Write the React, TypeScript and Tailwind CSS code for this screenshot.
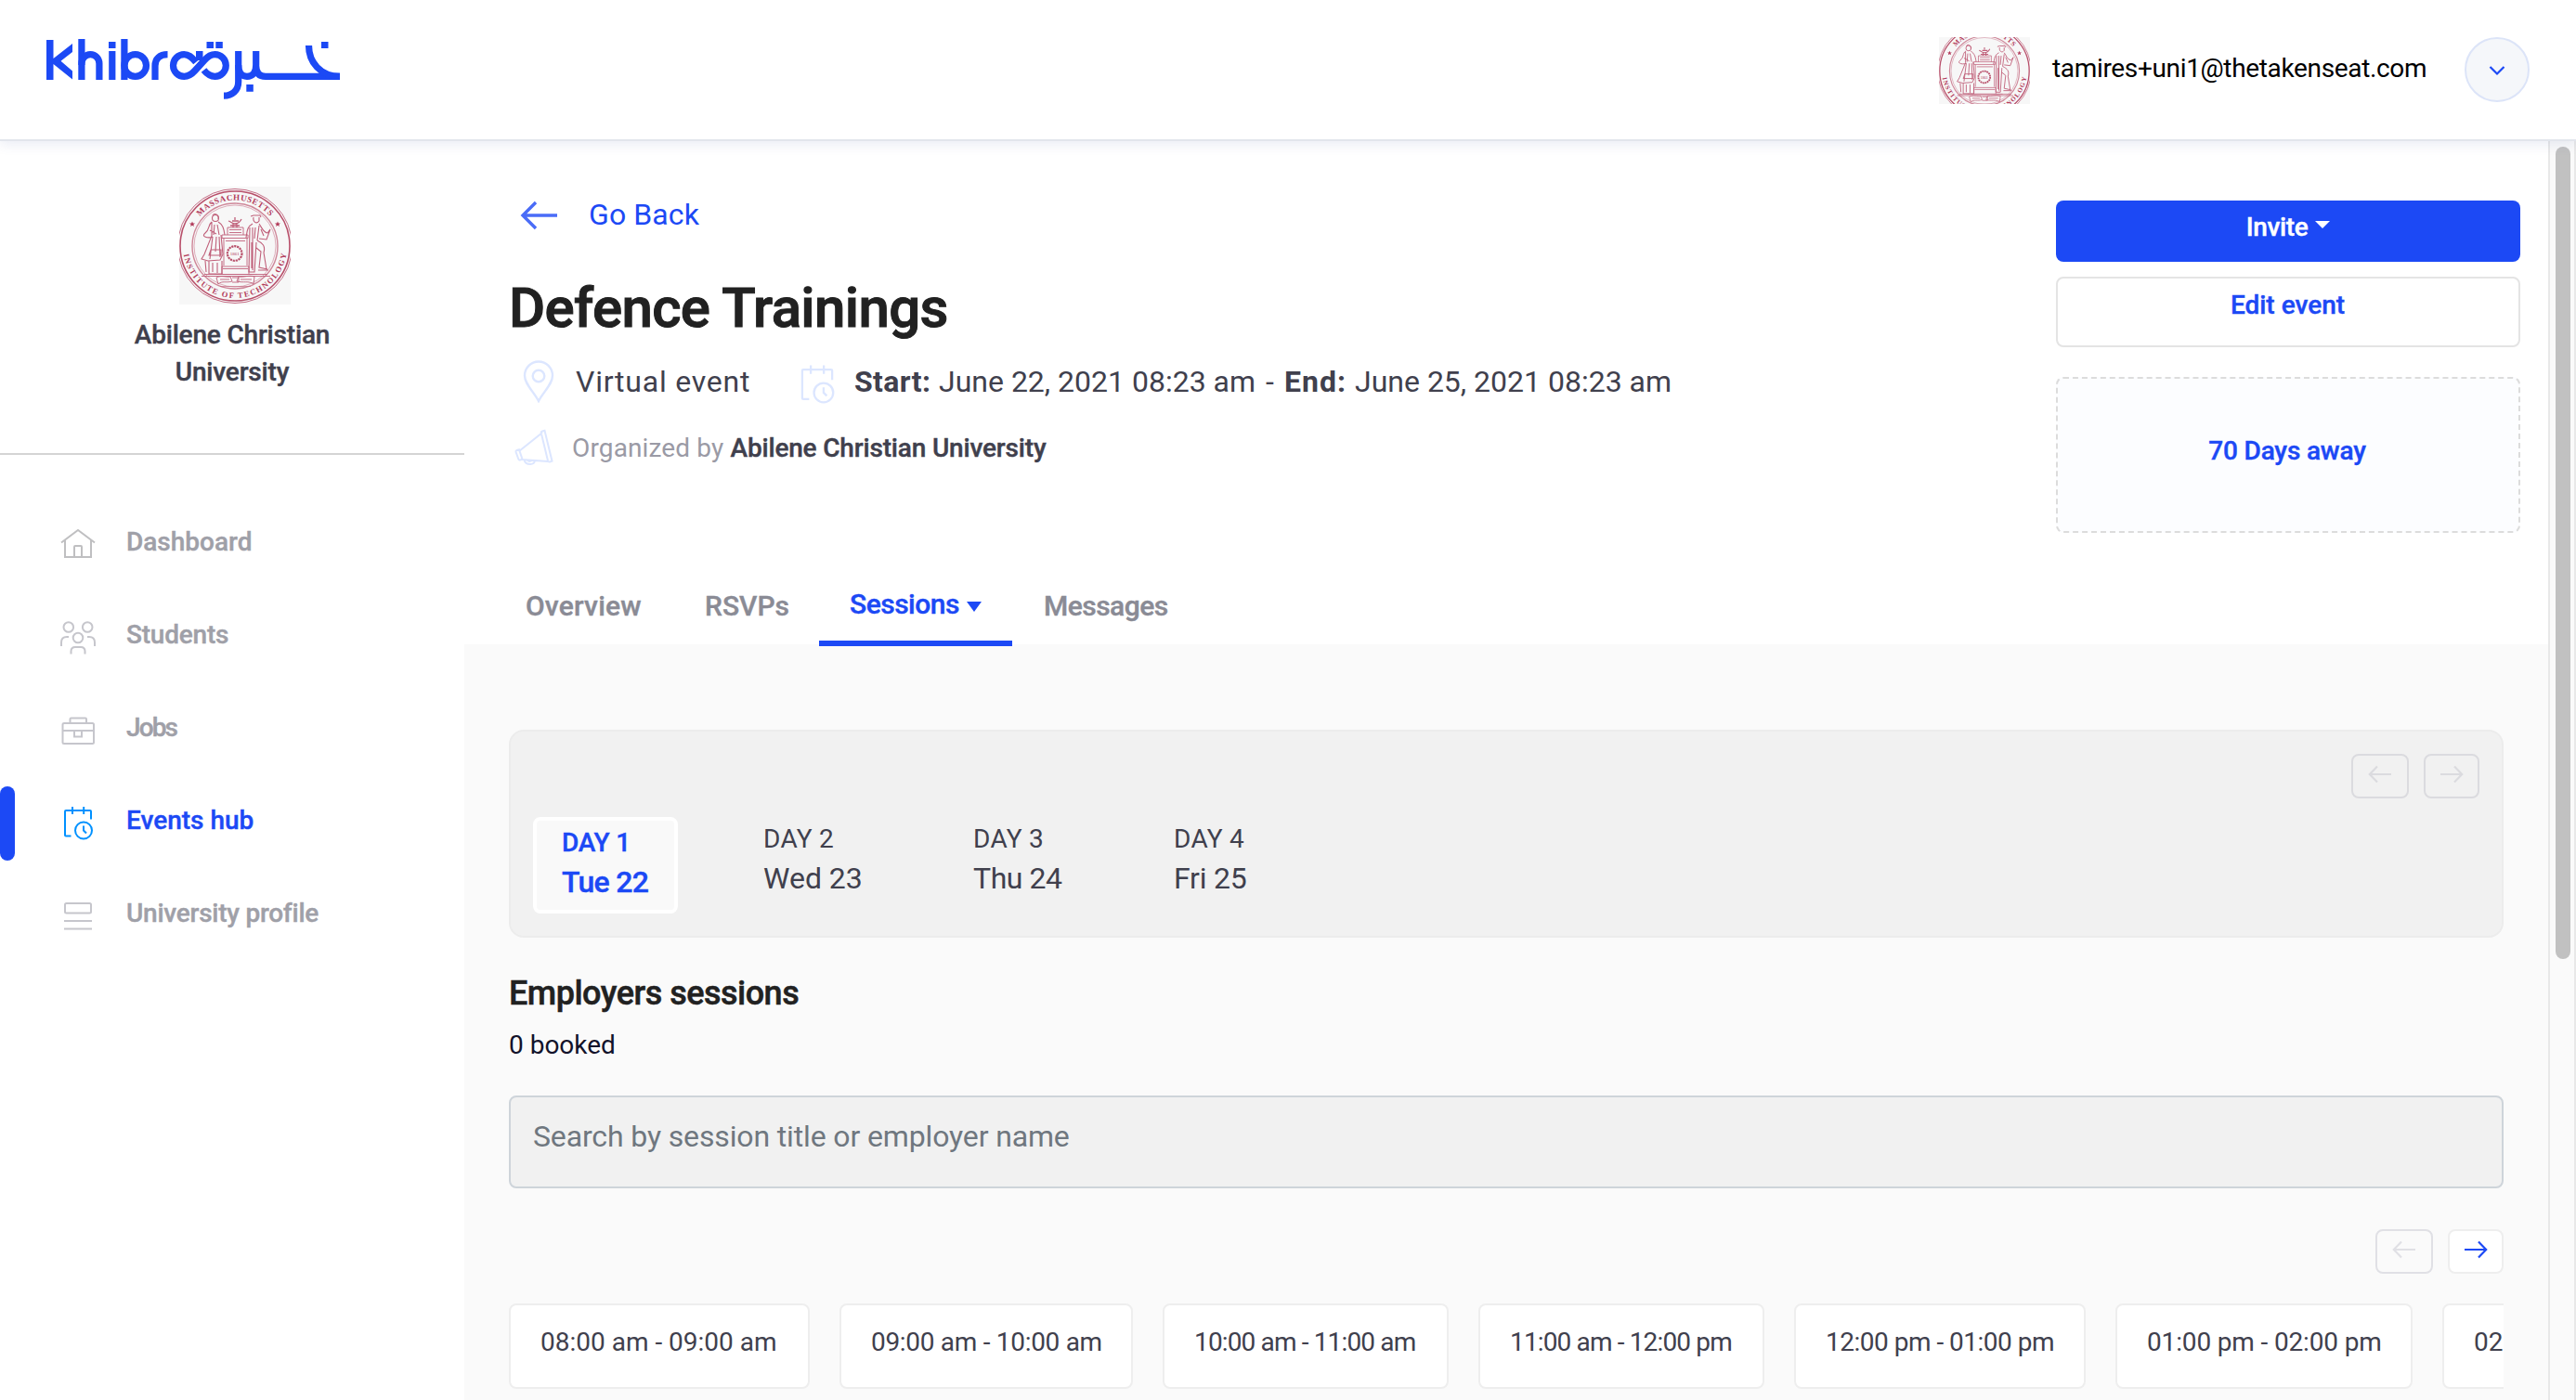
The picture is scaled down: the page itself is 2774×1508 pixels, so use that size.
import React from "react";

const BLUE = "#1c49f5";

function Logo() {
  return (
    <svg width="320" height="70" viewBox="48 40 320 70" fill="none" stroke={BLUE} strokeWidth="7.2">
      <g fill={BLUE} stroke="none">
        <path d="M50 43h7.500v20L78 47v9L65.500 65.800 78 76.500v9L57.500 69v17H50z" />
        <path d="M84.300 42h7.200v44h-7.200zM117 45h7.500v7H117zM117.200 55h7.200v31h-7.200zM130.300 42h7.200v44h-7.200z" />
        <path d="M211 55h7.500v10H211zM222.500 45h7.500v7h-7.500zM232.300 45h7.500v7h-7.500zM265.300 91h7.500v7.800h-7.500zM346 45h7.500v7H346z" />
      </g>
      <path d="M87.900 70V68.500A9.500 9.800 0 0 1 106.900 68.500V86" />
      <circle cx="145.700" cy="70.500" r="11.800" />
      <path d="M167 86V71C167 63 172 58.700 180.500 58.700" />
      <path d="M211 67C206 61 203 58.700 198.300 58.700A11.800 11.800 0 0 0 198.300 82.300C203 82.300 206 80.500 210 76L220 65C224 60.500 227 58.700 231.500 58.700A11.800 11.800 0 0 1 231.500 82.300C227 82.300 223.500 80.500 219.500 75.500" />
      <path d="M256.700 55V88C256.700 97.500 250 103.200 241 103.200" />
      <path d="M256.700 70C256.700 78 260 82.300 266 82.300S275.700 78 275.700 70V55M275.700 71C275.700 79 279.500 82.400 286 82.400H366" />
      <path d="M332.500 49C332.500 67 345 82.300 366 82.300" />
    </svg>
  );
}

function Seal({ className, id }: { className: string; id: string }) {
  return (
    <svg className={className} viewBox="0 0 120 127" preserveAspectRatio="xMidYMid slice" fill="none" stroke="#c0607a" strokeWidth="0.9">
      <rect width="120" height="127" fill="#f7f7f7" stroke="none" />
      <defs>
        <path id={`${id}-top`} d="M10.500 64A49.500 49.500 0 0 1 109.500 64" />
        <path id={`${id}-bottom`} d="M4 64A56 56 0 0 0 116 64" />
      </defs>
      <circle cx="60" cy="64" r="61.500" />
      <circle cx="60" cy="64" r="59" stroke="#b84f6a" strokeWidth="1.600" />
      <circle cx="60" cy="64" r="46" stroke="#cf8799" strokeWidth="1.400" />
      <circle cx="60" cy="64" r="44" strokeWidth="0.500" />
      <g fill="#b23a5a" stroke="none" fontFamily="Liberation Serif, serif" fontWeight="700">
        <text fontSize="9" textLength="86" lengthAdjust="spacing">
          <textPath href={`#${id}-top`} startOffset="34.500" textLength="86">MASSACHUSETTS</textPath>
        </text>
        <text fontSize="8.500">
          <textPath href={`#${id}-bottom`} startOffset="9" textLength="158">INSTITUTE OF TECHNOLOGY</textPath>
        </text>
        <path d="M14 37.500l.9 2h2.100l-1.700 1.400.7 2.200-2-1.300-2 1.300.7-2.200-1.700-1.400h2.100zM106 37.500l.9 2h2.100l-1.700 1.400.7 2.200-2-1.300-2 1.300.7-2.200-1.700-1.400h2.100z" />
      </g>
      <path d="M27 94.500H95M24 96.500H98" />
      <path d="M46 52H74V55.500H46zM48 55.500V85M73 55.500V85M50 58.500H71M46 94V86H75V94M47 88.500H74M52 44H69V52M52 44V52M54 46.500H67M54 49.500H67" />
      <path d="M53 37C56 38 57 40 60 40S65 39 67 35M55 42H65M58 40V44M62 40V44M60 33V36M57 37H64" strokeWidth="1.300" />
      <circle cx="59.700" cy="72" r="7.800" stroke="#b84f6a" strokeWidth="2.200" strokeDasharray="2.200 0.800" />
      <text x="59.700" y="74" textAnchor="middle" fontSize="5" fill="#b23a5a" stroke="none" fontFamily="Liberation Serif, serif">1861</text>
      <g strokeWidth="1.100">
        <circle cx="39" cy="34" r="3.500" />
        <path d="M36 31C38 28 43 30 42 35M35 38C31 41 33 46 28 50S31 56 36 54M42 38C47 41 48 45 49 52M35 38V53L27 73 24 78 31 80 44 79 47 73 45 52M38 41L37 52M41 41L43 52M33 47L40 51M36 54L33 78M40 54L39 70M43 54L44 76M34 68H45V74H32zM32 80V94H46V80M28 80L29 92M36 82V92M41 82V93" />
      </g>
      <g strokeWidth="1.100">
        <path d="M77 32L80 31H87L88 33M80 33C79 38 83 41 86 37V33M79 40C73 43 73 49 72 55M86 40C89 44 90 49 95 50L98 46 94 57 86 56M76 44L75 92H81L83 60M79 44V90M82 44L81 56M86 42L84 58M84 58C90 61 93 64 91 71L94 89M83 66L88 70 86 87 95 89M85 90H96M78 60V88M88 46L91 53" />
      </g>
      <path d="M40 98C45 95 51 98 55 97L57 102C51 104 46 101 42 105zM64 97C69 98 75 95 81 97L80 105C75 101 69 104 62 102zM57 98H64V103H57M44 100H54M66 100H78" />
      <path d="M38 94.500H84M44 107.500H77" strokeWidth="0.600" />
    </svg>
  );
}

function HomeIcon() {
  return (
    <svg width="40" height="40" viewBox="64 566 40 40" fill="none" stroke="#bfbfc1" strokeWidth="2">
      <path d="M66 585.500L84 572l18 13.500M70 583v18h28v-18M80 601v-11q0-1 1-1h6q1 0 1 1v11" />
    </svg>
  );
}
function StudentsIcon() {
  return (
    <svg width="40" height="40" viewBox="64 666 40 40" fill="none" stroke="#c6c6cc" strokeWidth="2">
      <circle cx="73.800" cy="676.500" r="5.300" />
      <circle cx="94.200" cy="676.500" r="5.300" />
      <circle cx="84" cy="688" r="5.300" />
      <path d="M66 697v-4q0-6 6-6h2M102 697v-4q0-6-6-6h-2M76.500 705.500v-3q0-4.500 4.500-4.500h6q4.500 0 4.500 4.500v3" />
    </svg>
  );
}
function JobsIcon() {
  return (
    <svg width="40" height="40" viewBox="64 766 40 40" fill="none" stroke="#c6c6cc" strokeWidth="2">
      <rect x="67.500" y="780" width="33.500" height="22" rx="1.500" />
      <path d="M75.500 780v-4.500q0-1 1-1h15.500q1 0 1 1v4.500M67.500 788H101M80 788v6.500h8V788" />
    </svg>
  );
}
function CalendarClock({ color, size }: { color: string; size: number }) {
  return (
    <svg width={size} height={size} viewBox="0 0 40 40" fill="none" stroke={color} strokeWidth="2">
      <path d="M12.500 35.500H7q-1 0-1-1V9q0-1 1-1h26q1 0 1 1v8.500M14 4v8M26.200 4v8" />
      <circle cx="26" cy="29.500" r="9" />
      <path d="M26 24.500v5l3 3" />
    </svg>
  );
}
function ProfileIcon() {
  return (
    <svg width="40" height="40" viewBox="64 966 40 40" fill="none" stroke="#c6c6cc" strokeWidth="2">
      <rect x="70" y="974" width="28" height="10.500" rx="1.500" />
      <path d="M69 993h30M69 1001.500h30" />
    </svg>
  );
}

const nav = [
  { label: "Dashboard", icon: <HomeIcon />, cls: "text-[#9fa0a8]" },
  { label: "Students", icon: <StudentsIcon />, cls: "text-[#9fa0a8] tracking-[-0.22px]" },
  { label: "Jobs", icon: <JobsIcon />, cls: "text-[#9fa0a8] tracking-[-1.9px]" },
  { label: "Events hub", icon: <CalendarClock color="#0091ff" size={40} />, cls: "text-[#1c49f5]", active: true },
  { label: "University profile", icon: <ProfileIcon />, cls: "text-[#9fa0a8] tracking-[-0.25px]" },
];

function Arrow({ dir, color }: { dir: "left" | "right"; color: string }) {
  return (
    <svg width="26" height="20" viewBox="0 0 26 20" fill="none" stroke={color} strokeWidth="2.200" className={dir === "right" ? "rotate-180" : ""}>
      <path d="M25 10H2M10 1.500L1.800 10 10 18.500" />
    </svg>
  );
}

const arrowBox = "flex h-12 justify-center rounded-lg border-2 pt-[10px]";

const days = [
  { day: "DAY 2", date: "Wed 23", w: "w-[226px]", t: "" },
  { day: "DAY 3", date: "Thu 24", w: "w-[216px]", t: "tracking-[-0.46px]" },
  { day: "DAY 4", date: "Fri 25", w: "w-[120px]", t: "tracking-[-0.2px]" },
];

const slots = [
  { label: "08:00 am - 09:00 am", w: "w-[324px]", t: "tracking-[0px]" },
  { label: "09:00 am - 10:00 am", w: "w-[316px]", t: "tracking-[-0.3px]" },
  { label: "10:00 am - 11:00 am", w: "w-[308px]", t: "tracking-[-0.85px]" },
  { label: "11:00 am - 12:00 pm", w: "w-[308px]", t: "tracking-[-0.85px]" },
  { label: "12:00 pm - 01:00 pm", w: "w-[314px]", t: "tracking-[-0.5px]" },
  { label: "01:00 pm - 02:00 pm", w: "w-[320px]", t: "tracking-[-0.15px]" },
  { label: "02:00 pm - 03:00 pm", w: "w-[328px]", t: "tracking-[0px]" },
];

function Header() {
  return (
    <header className="relative z-10 flex h-[152px] shrink-0 items-start border-b-2 border-[#e2e5ec] bg-white shadow-[0_4px_12px_rgba(60,80,160,0.10)]">
      <div className="ml-[48px] mt-[40px]"><Logo /></div>
      <Seal id="seal-small" className="ml-[1720px] mt-[40px] h-[72px] w-[98px] shrink-0" />
      <span className="ml-[24px] mt-[54px] w-[444px] text-[28px] leading-[40px] tracking-[-0.34px] text-black">tamires+uni1@thetakenseat.com</span>
      <button className="mt-[40px] flex size-[70px] items-center justify-center rounded-full border-2 border-[#dce4f8] bg-[#f5f7fa]">
        <svg width="18" height="12" viewBox="0 0 18 12" fill="none" stroke={BLUE} strokeWidth="2.200" className="mt-[2px]">
          <path d="M1.500 2L9 9.500 16.500 2" />
        </svg>
      </button>
    </header>
  );
}

function Sidebar() {
  return (
    <aside className="w-[500px] shrink-0 bg-white">
      <div className="flex h-[338px] flex-col items-center border-b-2 border-[#d4d4d4] pt-[49px]">
        <Seal id="seal-large" className="ml-[6px] h-[127px] w-[120px]" />
        <div className="mt-[13px] w-[260px] text-center text-[28px] font-medium leading-[40px] tracking-[-0.18px] text-[#40404d] [-webkit-text-stroke:0.4px]">Abilene Christian University</div>
      </div>
      <nav className="flex flex-col pt-[47px]">
        {nav.map((n) => (
          <div key={n.label} className="flex h-[100px] items-start">
            <div className={n.active ? "mt-[10px] h-[80px] w-4 rounded-lg bg-[#1c49f5]" : "w-4"} />
            <div className="ml-[48px] mt-[28px]">{n.icon}</div>
            <span className={`ml-[32px] mt-[27px] text-[28px] font-medium leading-[40px] [-webkit-text-stroke:0.4px] ${n.cls}`}>{n.label}</span>
          </div>
        ))}
      </nav>
    </aside>
  );
}

function Hero() {
  return (
    <section className="flex h-[542px] justify-between bg-white pl-[48px] pr-[30px]">
      <div className="flex flex-col">
        <div className="mt-[59px] flex h-[40px] items-center pl-[12px] text-[32px] leading-[40px] text-[#1c49f5]">
          <svg width="42" height="32" viewBox="0 0 42 32" fill="none" stroke="#4a6cf7" strokeWidth="3.400" className="mt-[2px]">
            <path d="M40 16H3M17 2L3 16l14 14" />
          </svg>
          <span className="ml-[32px] tracking-[0.1px]">Go Back</span>
        </div>
        <h1 className="mt-[45px] text-[60px] font-medium leading-[72px] tracking-[-0.63px] text-[#212121] [-webkit-text-stroke:1px]">Defence Trainings</h1>
        <div className="mt-[23px] flex h-[40px] items-center whitespace-nowrap text-[32px] leading-[40px] text-[#40404d]">
          <svg width="34" height="46" viewBox="0 0 34 46" fill="none" stroke="#dce6ff" strokeWidth="2.400" className="ml-[15px]">
            <path d="M17 44C12 34 2 26 2 16.500a15 15 0 0 1 30 0C32 26 22 34 17 44z" />
            <circle cx="17" cy="17" r="6.300" />
          </svg>
          <span className="ml-[23px] w-[240px] tracking-[0.77px]">Virtual event</span>
          <span className="-ml-[3px] mt-[1px]"><CalendarClock color="#dce6ff" size={46} /></span>
          <span className="ml-[17px] w-[91px] font-bold tracking-[0.4px]">Start:</span>
          <span className="w-[352px]">June 22, 2021 08:23 am</span>
          <span className="w-[20px]">-</span>
          <span className="w-[76px] font-bold tracking-[1px]">End:</span>
          <span>June 25, 2021 08:23 am</span>
        </div>
        <div className="mt-[31px] flex h-[40px] items-center whitespace-nowrap text-[28px] leading-[40px] text-[#9a9aa5]">
          <svg width="42" height="40" viewBox="0 0 42 40" fill="none" stroke="#dce6ff" strokeWidth="2" className="ml-[6px]">
            <path d="M5 24L30 4M8 33l28 2M30 2.500l2.500-.8 8 33-2.500.8q-1.500.3-2-1.200L28.800 4.500q-.4-1.500 1.200-2zM2.500 23l2.500-.8 3.500 10.500-2.500.8q-1.300.3-1.700-1L1.500 24.800q-.3-1.300 1-1.800zM10.500 33.500q1 4.500 6.500 4.500 4.500 0 5-4M13.500 33.500q2 2.500 5.500.5" />
          </svg>
          <span className="ml-[20px] mt-[1px] tracking-[0.14px]">Organized by</span>
          <span className="ml-[7px] mt-[1px] font-medium tracking-[-0.17px] text-[#40404d] [-webkit-text-stroke:0.4px]">Abilene Christian University</span>
        </div>
        <div className="mt-[98px] flex h-[96px] whitespace-nowrap text-[30px] font-medium leading-[40px] text-[#8a8b95] [-webkit-text-stroke:0.4px]">
          <span className="ml-[18px] mt-[33px] w-[193px] tracking-[0.2px]">Overview</span>
          <span className="mt-[33px] w-[123px]">RSVPs</span>
          <span className="relative z-10 flex h-[96px] w-[208px] shrink-0 border-b-[6px] border-[#1c49f5] pl-[33px] pt-[31px] text-[#1c49f5]">
            <span className="w-[125px] tracking-[-0.5px]">Sessions</span>
            <svg width="18" height="12" viewBox="0 0 18 12" className="mt-[17px]"><path d="M1 0h16L9 11z" fill={BLUE} stroke="none" /></svg>
          </span>
          <span className="ml-[34px] mt-[33px] tracking-[-0.52px]">Messages</span>
        </div>
      </div>
      <div className="flex w-[500px] flex-col pt-[64px] text-center text-[28px] font-medium leading-[40px] text-[#1c49f5] [-webkit-text-stroke:0.4px]">
        <button className="flex h-[66px] justify-center rounded-lg bg-[#1c49f5] pt-[9px] text-white">
          <span className="tracking-[-0.37px]">Invite</span>
          <svg width="16" height="8" viewBox="0 0 16 8" className="ml-[8px] mt-[13px]"><path d="M0 0h16L8 8z" fill="#fff" /></svg>
        </button>
        <button className="mt-[16px] flex h-[76px] justify-center rounded-lg border-2 border-[#e4e4e4] pr-[1px] pt-[9px]">Edit event</button>
        <div className="mt-[32px] h-[168px] rounded-lg border-2 border-dashed border-[#dcdcdc] bg-[#fcfdff] pr-[2px] pt-[58px] tracking-[-0.18px]">70 Days away</div>
      </div>
    </section>
  );
}

function Sessions() {
  return (
    <section className="flex flex-1 flex-col bg-[#fafafa] px-[48px] pt-[92px]">
      <div className="h-[224px] shrink-0 rounded-[16px] border-2 border-[#ececec] bg-[#f1f1f1] px-6 pt-6">
        <div className="flex justify-end gap-4">
          <div className={`${arrowBox} w-[62px] border-[#dbdbdf]`}><Arrow dir="left" color="#dbdbdf" /></div>
          <div className={`${arrowBox} w-[60px] border-[#dbdbdf]`}><Arrow dir="right" color="#dbdbdf" /></div>
        </div>
        <div className="mt-[20px] flex items-start">
          <div className="h-[104px] w-[156px] rounded-lg border-4 border-white bg-[#f9f9f9] pl-[27px] pt-[4px] font-medium text-[#1c49f5] [-webkit-text-stroke:0.4px]">
            <div className="text-[28px] leading-[40px] tracking-[-0.2px]">DAY 1</div>
            <div className="text-[32px] leading-[44px] tracking-[-0.7px]">Tue 22</div>
          </div>
          <div className="ml-[92px] flex pt-[4px] text-[#40404d]">
            {days.map((d) => (
              <div key={d.day} className={d.w}>
                <div className="text-[28px] leading-[40px] tracking-[0.3px]">{d.day}</div>
                <div className={`text-[32px] leading-[44px] ${d.t}`}>{d.date}</div>
              </div>
            ))}
          </div>
        </div>
      </div>
      <h2 className="mt-[36px] text-[36px] font-medium leading-[48px] tracking-[-0.5px] text-[#212121] [-webkit-text-stroke:0.5px]">Employers sessions</h2>
      <p className="mt-[12px] text-[28px] leading-[40px] text-[#12122a]">0 booked</p>
      <div className="mt-[34px] h-[100px] shrink-0 rounded-lg border-2 border-[#ced4da] bg-[#f1f1f1] pl-[24px] pt-[22px] text-[32px] leading-[40px] tracking-[-0.14px] text-[#6f777f]">Search by session title or employer name</div>
      <div className="mt-[44px] flex justify-end gap-4">
        <div className={`${arrowBox} w-[62px] border-[#e0e0e5]`}><Arrow dir="left" color="#e0e0e5" /></div>
        <div className={`${arrowBox} w-[60px] border-[#eeeeee] bg-white`}><Arrow dir="right" color={BLUE} /></div>
      </div>
      <div className="mt-[32px] flex h-[104px] shrink-0 items-start gap-8 overflow-hidden">
        {slots.map((s) => (
          <div key={s.label} className={`h-[92px] shrink-0 whitespace-nowrap rounded-lg border-2 border-[#eeeeee] bg-white pl-[32px] pt-[20px] text-[28px] leading-[40px] text-[#40404d] ${s.w} ${s.t}`}>{s.label}</div>
        ))}
      </div>
    </section>
  );
}

export default function App() {
  return (
    <div className="flex h-[1508px] w-[2774px] flex-col overflow-hidden bg-white font-['Roboto',sans-serif]">
      <Header />
      <div className="flex min-h-0 flex-1">
        <Sidebar />
        <main className="flex w-[2244px] shrink-0 flex-col">
          <Hero />
          <Sessions />
        </main>
        <div className="w-[30px] border-x-2 border-[#e8e8e8] bg-[#fafafa] pl-[6px] pt-[6px]">
          <div className="h-[875px] w-4 rounded-full bg-[#c1c1c1]" />
        </div>
      </div>
    </div>
  );
}
